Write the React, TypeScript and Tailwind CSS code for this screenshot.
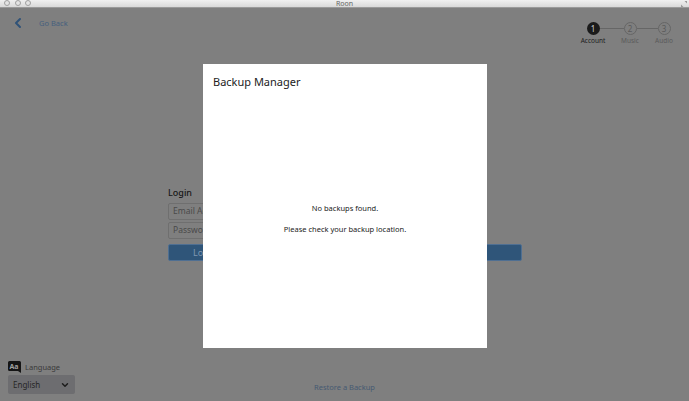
import { ChevronLeft, ChevronDown } from "lucide-react";

const steps = [
	{ n: 1, label: "Account", active: true, width: "w-[40px]", line: "" },
	{ n: 2, label: "Music", active: false, width: "w-[34px]", line: "w-[24px]" },
	{ n: 3, label: "Audio", active: false, width: "w-[34px]", line: "w-[21px]" },
];

function TitleBar() {
	return (
		<div className="relative flex h-[8px] shrink-0 items-center justify-center border-b border-[#9a9a9a] bg-gradient-to-b from-[#f0f0f0] to-[#d9d9d9]">
			<div className="absolute left-[4px] top-[0px] flex gap-[4.5px]">
				{[0, 1, 2].map((i) => (
					<span
						key={i}
						className="h-[6px] w-[6px] rounded-full border border-[#a0a0a0] bg-[#e4e4e4]"
					/>
				))}
			</div>
			<span className="text-[7px] leading-none text-[#666]">Roon</span>
			<svg
				className="absolute right-[1px] top-[0px]"
				width="8"
				height="8"
				viewBox="0 0 8 8">
				<path d="M1 7V4.5L3.5 7zM7 1v2.5L4.5 1z" fill="#999" />
			</svg>
		</div>
	);
}

function Stepper() {
	return (
		<div className="mt-[7px] flex items-start">
			{steps.map((s) => (
				<div key={s.n} className={`relative flex flex-col items-center ${s.width}`}>
					{s.line && (
						<span className={`absolute right-[23px] top-[6px] h-px bg-[#666] ${s.line}`} />
					)}
					<span
						className={
							s.active
								? "flex h-[13px] w-[13px] items-center justify-center rounded-full bg-[#1a1a1a] text-[8px] leading-none text-[#cfcfcf]"
								: "flex h-[13px] w-[13px] items-center justify-center rounded-full border border-[#666] text-[8px] leading-none text-[#5a5a5a]"
						}>
						{s.n}
					</span>
					<span
						className={
							s.active
								? "mt-[1px] text-[6.5px] leading-[10px] text-[#1c1c1c]"
								: "mt-[1px] text-[6.5px] leading-[10px] text-[#5a5a5a]"
						}>
						{s.label}
					</span>
				</div>
			))}
		</div>
	);
}

function LoginForm() {
	return (
		<div className="ml-[168px] mt-[140px] w-[354px]">
			<div className="text-[9px] leading-[13px] font-medium text-[#161616]">Login</div>
			<div className="mt-[4px] flex h-[17px] w-[177px] items-center rounded-[2px] border border-[#6f6f6f] px-[4px] text-[8.5px] text-[#4a4a4a]">
				Email Address
			</div>
			<div className="mt-[2px] flex h-[17px] w-[177px] items-center rounded-[2px] border border-[#6f6f6f] px-[4px] text-[8.5px] text-[#4a4a4a]">
				Password
			</div>
			<div className="mt-[5px] flex h-[17px] items-center rounded-[2px] border border-[#4f6f92] bg-[#2f5579] pl-[24px] text-[9px] text-[#7f97b2]">
				Login
			</div>
		</div>
	);
}

export default function App() {
	return (
		<div className="relative flex h-[401px] w-[689px] flex-col overflow-hidden bg-[#7f7f7f] font-['Noto_Sans','Open_Sans',sans-serif]">
			<TitleBar />
			<div className="flex items-start justify-between pl-[10px] pr-[8px] pt-[7px]">
				<div className="flex items-center">
					<ChevronLeft size={16} strokeWidth={3} className="text-[#2f5278]" />
					<span className="ml-[13px] text-[7.5px] leading-[12px] text-[#46607e]">Go Back</span>
				</div>
				<Stepper />
			</div>
			<LoginForm />
			<div className="mt-auto grid grid-cols-3 items-end px-[8px] pb-[7px]">
				<div>
					<div className="flex items-center gap-[4px]">
						<svg width="13" height="12" viewBox="0 0 13 12">
							<path d="M0 1.5A1.5 1.5 0 0 1 1.5 0h10A1.5 1.5 0 0 1 13 1.5V12l-3-2H1.5A1.5 1.5 0 0 1 0 8.5z" fill="#151515" />
							<text x="1.5" y="7.5" fontSize="7" fontWeight="700" fill="#a0a0a0">
								Aa
							</text>
						</svg>
						<span className="text-[7.5px] leading-[12px] text-[#3a3a3a]">Language</span>
					</div>
					<div className="mt-[2px] flex h-[19px] w-[67px] items-center justify-between rounded-[2px] bg-[#6d6d70] px-[5px] text-[8px] text-[#262626]">
						English
						<ChevronDown size={10} strokeWidth={3.5} className="text-[#1c1c1c]" />
					</div>
				</div>
				<div className="text-center text-[7.5px] leading-[14px] text-[#465a72]">
					Restore a Backup
				</div>
			</div>

			{/* Backup Manager modal */}
			<div className="absolute left-[203px] top-[64px] flex h-[284px] w-[284px] flex-col bg-white">
				<h2 className="pl-[10px] pt-[9px] text-[11px] leading-[18px] text-[#222]">
					Backup Manager
				</h2>
				<div className="flex flex-1 flex-col items-center pt-[111px] text-[7.5px] leading-[12px] text-[#222]">
					<p>No backups found.</p>
					<p className="mt-[9px]">Please check your backup location.</p>
				</div>
			</div>
		</div>
	);
}
